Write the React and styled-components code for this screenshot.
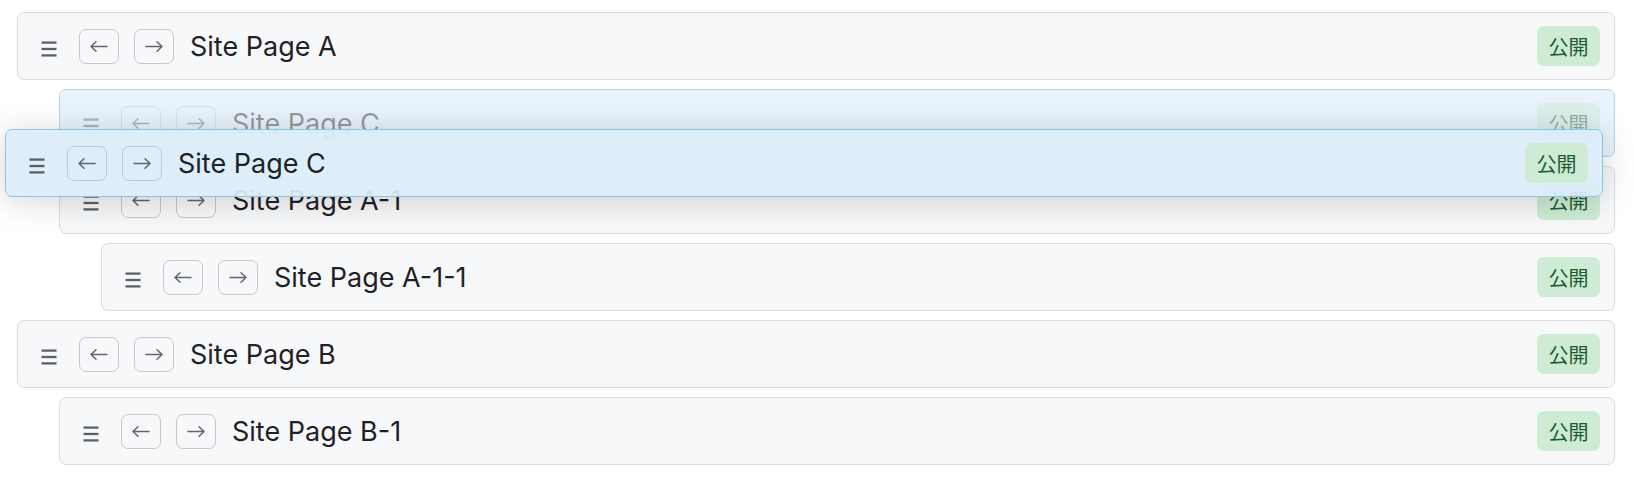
import React from 'react';
import styled, { createGlobalStyle } from 'styled-components';

const GlobalStyle = createGlobalStyle`
  html, body {
    margin: 0;
    padding: 0;
    background: #ffffff;
  }
  body {
    font-family: Inter, "Noto Sans CJK JP", sans-serif;
  }
`;

const Page = styled.div`
  padding: 12px 19px 12px 17px;
`;

const List = styled.div`
  position: relative;
  display: flex;
  flex-direction: column;
  gap: 9px;
`;

const Row = styled.div`
  display: flex;
  align-items: center;
  box-sizing: border-box;
  height: 68px;
  margin-left: ${(p) => p.$depth * 42}px;
  padding: 0 14px 0 23px;
  background: ${(p) => (p.$ghost ? '#e8f3fc' : '#f7f8fa')};
  border: 1.5px solid ${(p) => (p.$ghost ? '#b1d8f1' : '#dadcdf')};
  border-radius: 7px;
`;

const Overlay = styled(Row)`
  position: absolute;
  top: 117px;
  left: -12px;
  right: 12px;
  margin-left: 0;
  background: rgba(219, 237, 250, 0.93);
  border-color: #8cc4e5;
  box-shadow: 0 4px 34px rgba(0, 0, 0, 0.17);
  z-index: 2;
`;

const Content = styled.div`
  display: flex;
  align-items: center;
  flex: 1;
  height: 100%;
  opacity: ${(p) => (p.$faded ? 0.42 : 1)};
`;

const Handle = styled.svg`
  width: 16px;
  height: 16px;
  margin-top: 6px;
  flex-shrink: 0;
  color: #5c6066;
`;

const Buttons = styled.div`
  display: flex;
  gap: 15px;
  margin-left: 22px;
`;

const ArrowButton = styled.button`
  display: flex;
  align-items: center;
  justify-content: center;
  box-sizing: border-box;
  width: 40px;
  height: 35px;
  padding: 0;
  background: transparent;
  border: 1.5px solid #c6c8cc;
  border-radius: 7px;
  color: #62666b;
`;

const Title = styled.span`
  margin-left: 16px;
  font-size: 27px;
  color: #1e2227;
  white-space: nowrap;
`;

const Spacer = styled.div`
  flex: 1;
`;

const Badge = styled.span`
  display: flex;
  align-items: center;
  justify-content: center;
  box-sizing: border-box;
  height: 40px;
  width: 63px;
  border-radius: 7px;
  background: #cdebd5;
  color: #1f5a31;
  font-family: "Noto Sans CJK JP", sans-serif;
  font-size: 20px;
`;

function HandleIcon() {
  return (
    <Handle viewBox="0 0 16 16">
      <g stroke="currentColor" strokeWidth="2.3" fill="none">
        <line x1="0.5" y1="1.6" x2="15.5" y2="1.6" />
        <line x1="0.5" y1="8" x2="15.5" y2="8" />
        <line x1="0.5" y1="14.4" x2="15.5" y2="14.4" />
      </g>
    </Handle>
  );
}

function Arrow({ dir }) {
  const d = dir === 'left' ? 'M1 5.5H17M6 0.8L1 5.5L6 10.2' : 'M1 5.5H17M12 0.8L17 5.5L12 10.2';
  return (
    <svg width="18" height="11" viewBox="0 0 18 11">
      <path d={d} stroke="currentColor" strokeWidth="1.5" fill="none" strokeLinecap="round" strokeLinejoin="round" />
    </svg>
  );
}

function RowBody({ title, faded }) {
  return (
    <Content $faded={faded}>
      <HandleIcon />
      <Buttons>
        <ArrowButton><Arrow dir="left" /></ArrowButton>
        <ArrowButton><Arrow dir="right" /></ArrowButton>
      </Buttons>
      <Title>{title}</Title>
      <Spacer />
      <Badge>公開</Badge>
    </Content>
  );
}

const pages = [
  { id: 'a', title: 'Site Page A', depth: 0 },
  { id: 'c', title: 'Site Page C', depth: 1, ghost: true },
  { id: 'a1', title: 'Site Page A-1', depth: 1 },
  { id: 'a11', title: 'Site Page A-1-1', depth: 2 },
  { id: 'b', title: 'Site Page B', depth: 0 },
  { id: 'b1', title: 'Site Page B-1', depth: 1 },
];

export default function App() {
  return (
    <Page>
      <GlobalStyle />
      <List>
        {pages.map((p) => (
          <Row key={p.id} $depth={p.depth} $ghost={p.ghost}>
            <RowBody title={p.title} faded={p.ghost} />
          </Row>
        ))}
        <Overlay $depth={0}>
          <RowBody title="Site Page C" />
        </Overlay>
      </List>
    </Page>
  );
}
